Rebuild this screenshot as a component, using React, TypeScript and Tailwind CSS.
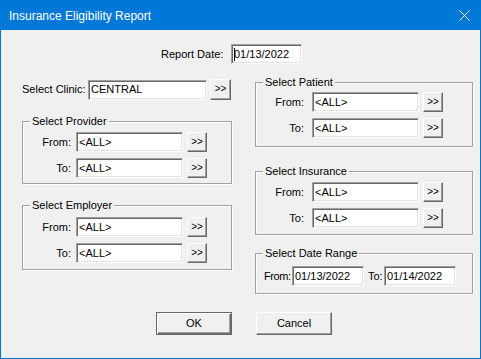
import React from "react"

const Field = ({ value, className = "" }: { value: string; className?: string }) => (
  <div
    className={`flex h-[20px] items-center overflow-hidden whitespace-nowrap border border-t-[#a0a0a0] border-l-[#a0a0a0] border-b-white border-r-white bg-white pl-[2px] shadow-[inset_1px_1px_0_#696969,inset_-1px_-1px_0_#e3e3e3] ${className}`}
  >
    {value}
  </div>
)

const PickButton = ({ className = "h-[20px] w-[20px]" }: { className?: string }) => (
  <button
    className={`flex items-center justify-center border border-t-white border-l-white border-b-[#696969] border-r-[#696969] bg-[#f0f0f0] pb-[1px] text-[10px] leading-none shadow-[inset_-1px_-1px_0_#a0a0a0] ${className}`}
  >
    &gt;&gt;
  </button>
)

const GroupBox = ({
  title,
  className = "",
  children,
}: {
  title: string
  className?: string
  children: React.ReactNode
}) => (
  <div
    className={`relative border border-[#a0a0a0] shadow-[inset_1px_1px_0_white,1px_1px_0_white] ${className}`}
  >
    <span className="absolute -top-[8px] left-[7px] bg-[#f0f0f0] px-[2px] leading-[14px]">
      {title}
    </span>
    {children}
  </div>
)

const RangeRow = ({ label, wide }: { label: string; wide?: boolean }) => (
  <div className="flex items-center">
    <span className="w-[48px] text-right">{label}</span>
    <Field value="<ALL>" className={wide ? "ml-[8px] w-[107px]" : "ml-[5px] w-[107px]"} />
    <PickButton className="ml-[4px] h-[20px] w-[20px]" />
  </div>
)

export default function App() {
  return (
    <div className="flex h-[359px] w-[481px] flex-col border border-[#0078d7] bg-[#f0f0f0] font-['Liberation_Sans',Arial,sans-serif] text-[11px] text-black">
      {/* title bar */}
      <div className="flex h-[29px] shrink-0 items-center justify-between bg-[#0078d7] pl-[8px] pr-[10px] text-[12px] text-white">
        <span>Insurance Eligibility Report</span>
        <svg width="11" height="11" viewBox="0 0 11 11" className="mb-[1px]">
          <path d="M0.5 0.5 L10.5 10.5 M10.5 0.5 L0.5 10.5" stroke="white" strokeWidth="1" />
        </svg>
      </div>

      {/* report date */}
      <div className="mt-[14px] flex items-center pl-[160px]">
        <span className="w-[70px]">Report Date:</span>
        <div className="flex h-[20px] w-[71px] items-center border border-t-[#a0a0a0] border-l-[#a0a0a0] border-b-white border-r-white bg-white pl-[2px] shadow-[inset_1px_1px_0_#696969,inset_-1px_-1px_0_#e3e3e3]">
          <span className="h-[13px] w-px bg-black" />
          <span className="-ml-[1px]">01/13/2022</span>
        </div>
      </div>

      {/* columns */}
      <div className="mt-[15px] flex items-start gap-[23px] pl-[21px]">
        <div className="flex w-[210px] flex-col">
          <div className="flex h-[21px] items-center">
            <span className="w-[66px]">Select Clinic:</span>
            <Field value="CENTRAL" className="w-[119px]" />
            <PickButton className="ml-[3px] h-[21px] w-[21px]" />
          </div>
          <GroupBox title="Select Provider" className="mt-[21px] h-[63px]">
            <div className="flex flex-col gap-[6px] pt-[10px]">
              <RangeRow label="From:" />
              <RangeRow label="To:" />
            </div>
          </GroupBox>
          <GroupBox title="Select Employer" className="mt-[21px] h-[65px]">
            <div className="flex flex-col gap-[6px] pt-[11px]">
              <RangeRow label="From:" />
              <RangeRow label="To:" />
            </div>
          </GroupBox>
        </div>

        <div className="flex w-[218px] flex-col pt-[3px]">
          <GroupBox title="Select Patient" className="h-[65px]">
            <div className="flex flex-col gap-[6px] pt-[9px]">
              <RangeRow label="From:" wide />
              <RangeRow label="To:" wide />
            </div>
          </GroupBox>
          <GroupBox title="Select Insurance" className="mt-[24px] h-[64px]">
            <div className="flex flex-col gap-[6px] pt-[10px]">
              <RangeRow label="From:" wide />
              <RangeRow label="To:" wide />
            </div>
          </GroupBox>
          <GroupBox title="Select Date Range" className="mt-[18px] h-[41px]">
            <div className="flex items-center pl-[8px] pt-[12px]">
              <span className="w-[28px] whitespace-nowrap tracking-[-0.4px]">From:</span>
              <Field value="01/13/2022" className="w-[72px]" />
              <span className="ml-[4px] w-[16px] whitespace-nowrap">To:</span>
              <Field value="01/14/2022" className="w-[72px]" />
            </div>
          </GroupBox>
        </div>
      </div>

      {/* actions */}
      <div className="mt-[18px] flex gap-[24px] pl-[155px]">
        <button className="flex h-[23px] w-[76px] items-center justify-center border border-[#696969] bg-[#f0f0f0] shadow-[inset_1px_1px_0_white,inset_-1px_-1px_0_#696969,inset_-2px_-2px_0_#a0a0a0]">
          OK
        </button>
        <button className="flex h-[23px] w-[76px] items-center justify-center border border-t-white border-l-white border-b-[#696969] border-r-[#696969] bg-[#f0f0f0] shadow-[inset_-1px_-1px_0_#a0a0a0]">
          Cancel
        </button>
      </div>
    </div>
  )
}
